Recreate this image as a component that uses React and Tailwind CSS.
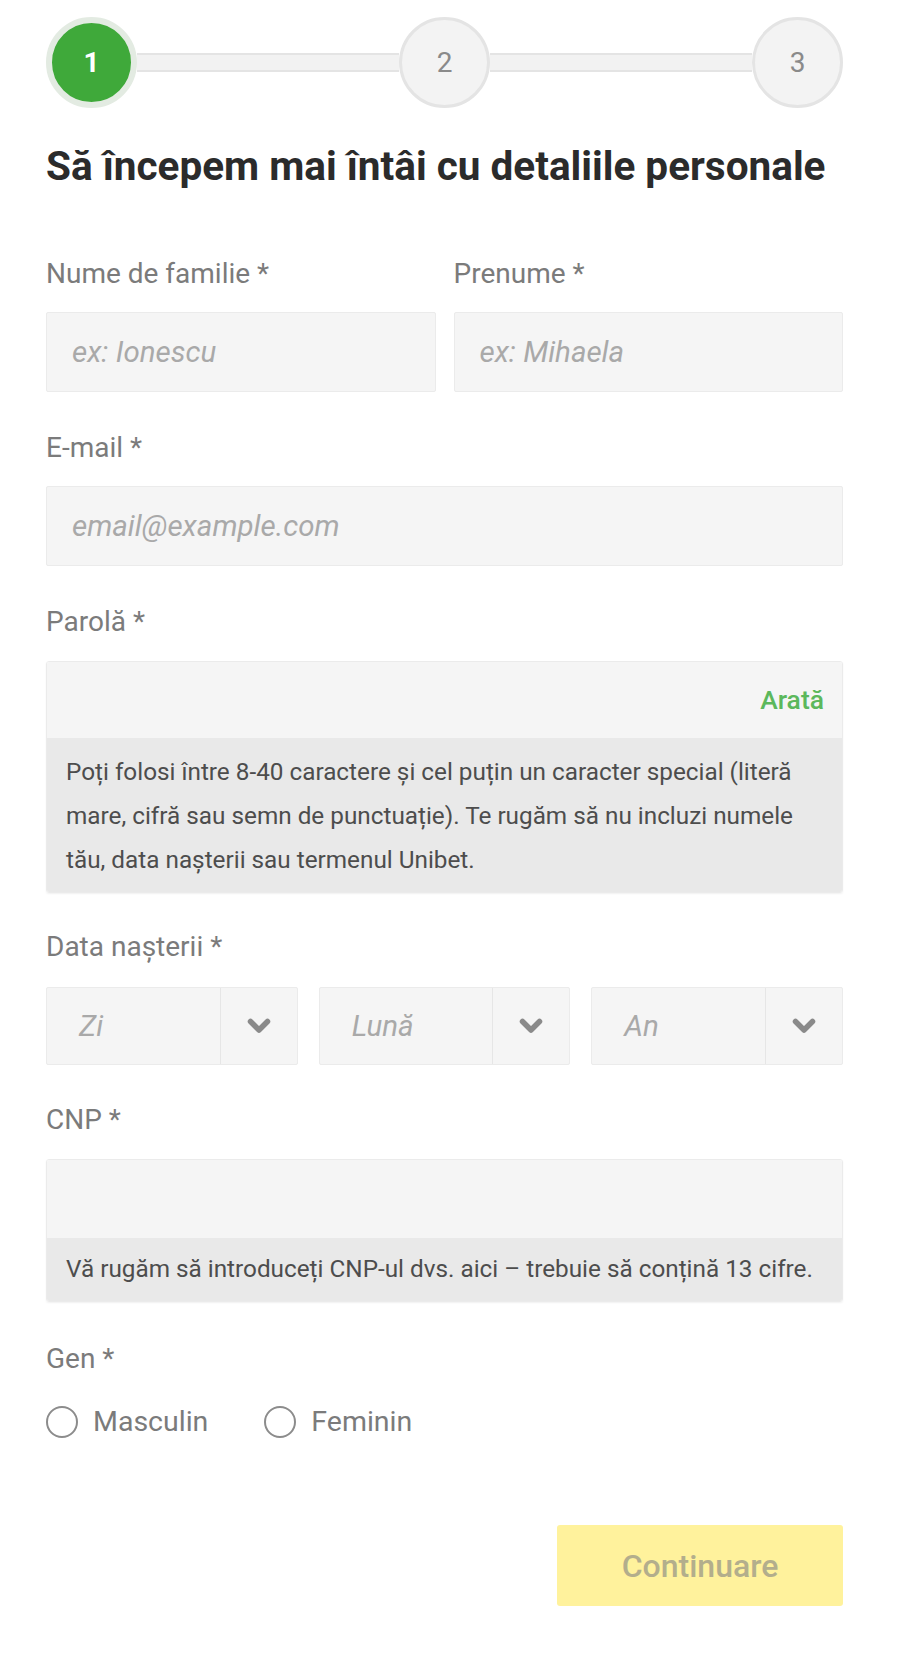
import React from "react";

const Label = ({ children }) => (
  <div className="text-[28px] leading-[32px] text-[#7b7b7b]">{children}</div>
);

const TextInput = ({ placeholder }) => (
  <div className="h-[80px] flex items-center bg-[#f5f5f5] border border-[#ebebeb] rounded-[2px] px-[25px]">
    <span className="text-[29.5px] italic text-[#a9a9a9]">{placeholder}</span>
  </div>
);

const Chevron = () => (
  <svg width="26" height="18" viewBox="0 0 26 18" fill="none">
    <polyline
      points="4.5,4.5 13,13 21.5,4.5"
      stroke="#8a8a8a"
      strokeWidth="5.5"
      strokeLinecap="round"
      strokeLinejoin="round"
    />
  </svg>
);

const Select = ({ placeholder }) => (
  <div className="h-[78px] flex bg-[#f5f5f5] border border-[#ebebeb] rounded-[2px]">
    <div className="flex-1 flex items-center pl-[32px]">
      <span className="text-[29.5px] italic text-[#a9a9a9]">{placeholder}</span>
    </div>
    <div className="w-[77px] flex items-center justify-center border-l border-[#e6e6e6]">
      <Chevron />
    </div>
  </div>
);

const Radio = ({ label }) => (
  <div className="flex items-center gap-[15px]">
    <div className="w-[32px] h-[32px] rounded-full border-2 border-[#8c8c8c] bg-white" />
    <span className="text-[28.5px] text-[#7b7b7b]">{label}</span>
  </div>
);

export default function App() {
  return (
    <div className="w-[900px] min-h-[1659px] bg-white font-[Roboto,sans-serif]">
      <div className="ml-[46px] w-[797px] pt-[17px] pb-[52px]">
        {/* STEPPER */}
        <div className="flex items-center">
          <div className="w-[91px] h-[91px] rounded-full bg-[#3fa93a] border-[6px] border-[#e3ebe2] flex items-center justify-center">
            <span className="text-[28px] font-bold text-white">1</span>
          </div>
          <div className="flex-1 h-[19px] bg-[#f2f2f2] border-y-2 border-[#e4e4e4]" />
          <div className="w-[91px] h-[91px] rounded-full bg-[#f3f3f3] border-[3px] border-[#e4e4e4] flex items-center justify-center">
            <span className="text-[28px] text-[#8a8a8a]">2</span>
          </div>
          <div className="flex-1 h-[19px] bg-[#f2f2f2] border-y-2 border-[#e4e4e4]" />
          <div className="w-[91px] h-[91px] rounded-full bg-[#f3f3f3] border-[3px] border-[#e4e4e4] flex items-center justify-center">
            <span className="text-[28px] text-[#8a8a8a]">3</span>
          </div>
        </div>

        {/* TITLE */}
        <h1 className="mt-[34px] text-[40.5px] leading-[48px] font-bold text-[#2b2b2b]">
          Să începem mai întâi cu detaliile personale
        </h1>

        {/* NAME */}
        <div className="mt-[68px] grid grid-cols-2 gap-[18px]">
          <div>
            <Label>Nume de familie *</Label>
            <div className="mt-[22px]">
              <TextInput placeholder="ex: Ionescu" />
            </div>
          </div>
          <div>
            <Label>Prenume *</Label>
            <div className="mt-[22px]">
              <TextInput placeholder="ex: Mihaela" />
            </div>
          </div>
        </div>

        {/* EMAIL */}
        <div className="mt-[40px]">
          <Label>E-mail *</Label>
          <div className="mt-[22px]">
            <TextInput placeholder="email@example.com" />
          </div>
        </div>

        {/* PASSWORD */}
        <div className="mt-[40px]">
          <Label>Parolă *</Label>
          <div className="mt-[23px] rounded-[3px] border border-[#ebebeb] overflow-hidden shadow-[0_1px_2px_rgba(0,0,0,0.06)]">
            <div className="h-[76px] bg-[#f5f5f5] flex items-center justify-end pr-[18px]">
              <span className="text-[26.5px] font-medium text-[#5cb85c]">Arată</span>
            </div>
            <div className="bg-[#e9e9e9] px-[19px] pt-[12px] pb-[10px] text-[24.3px] leading-[44px] text-[#4d4d4d]">
              Poți folosi între 8-40 caractere și cel puțin un caracter special (literă mare, cifră sau semn de punctuație). Te rugăm să nu incluzi numele tău, data nașterii sau termenul Unibet.
            </div>
          </div>
        </div>

        {/* BIRTH DATE */}
        <div className="mt-[38px]">
          <Label>Data nașterii *</Label>
          <div className="mt-[24px] grid grid-cols-3 gap-[21px]">
            <Select placeholder="Zi" />
            <Select placeholder="Lună" />
            <Select placeholder="An" />
          </div>
        </div>

        {/* CNP */}
        <div className="mt-[39px]">
          <Label>CNP *</Label>
          <div className="mt-[23px] rounded-[3px] border border-[#ebebeb] overflow-hidden shadow-[0_1px_2px_rgba(0,0,0,0.06)]">
            <div className="h-[78px] bg-[#f5f5f5]" />
            <div className="h-[63px] bg-[#e9e9e9] px-[19px] flex items-center text-[24.3px] text-[#4d4d4d] whitespace-nowrap">
              Vă rugăm să introduceți CNP-ul dvs. aici – trebuie să conțină 13 cifre.
            </div>
          </div>
        </div>

        {/* GENDER */}
        <div className="mt-[41px]">
          <Label>Gen *</Label>
          <div className="mt-[31px] h-[32px] flex items-center gap-[56px]">
            <Radio label="Masculin" />
            <Radio label="Feminin" />
          </div>
        </div>

        {/* SUBMIT */}
        <div className="mt-[87px] flex justify-end">
          <button className="w-[286px] h-[81px] rounded-[3px] bg-[#fff29c] text-[32px] font-medium text-[#b3ae8c]">
            Continuare
          </button>
        </div>
      </div>
    </div>
  );
}
